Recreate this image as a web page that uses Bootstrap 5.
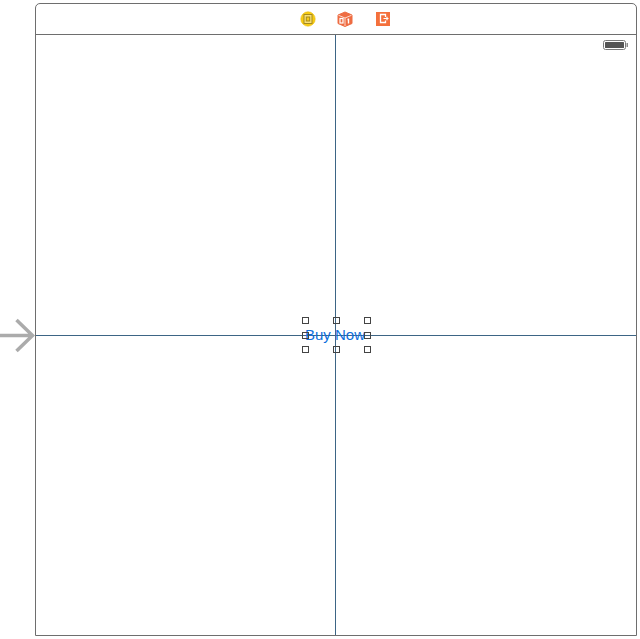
<!DOCTYPE html>
<html lang="en">
<head>
<meta charset="utf-8">
<title>Buy Now</title>
<link rel="stylesheet" href="https://cdn.jsdelivr.net/npm/bootstrap@5.3.0/dist/css/bootstrap.min.css">
<style>
html,body{background:#fff;height:100%;overflow:hidden}
.stage{width:640px;height:639px;padding:3px 3px 3px 35px}
.scene{width:602px;height:633px;border:1px solid #6e6e6e;border-radius:5px 5px 0 0;background:#fff}
.scene-bar{height:31px;border-bottom:1px solid #6e6e6e;gap:21px;padding-left:18px}
.scene-view{height:601px}
.guide-v,.guide-h{position:absolute;background:#3d6585}
.guide-v{left:299px;top:0;width:1px;height:100%}
.guide-h{left:0;top:300px;height:1px;width:100%}
.entry-arrow{position:absolute;left:-36px;top:283px}
.battery{position:absolute;right:8px;top:5px}
.buy-label{position:absolute;left:269px;top:291px;font:15px/18px "Liberation Sans",Arial,sans-serif;color:#0d6fdc;white-space:nowrap}
.grip{position:absolute;width:7px;height:7px;border:1px solid #444;background:transparent}
</style>
</head>
<body class="m-0">
<div class="stage">
  <div class="scene d-flex flex-column position-relative">
    <div class="scene-bar d-flex align-items-center justify-content-center flex-shrink-0">
      <svg width="16" height="16" viewBox="0 0 16 16"><circle cx="8" cy="8" r="7.200" fill="#f7cb12" stroke="#ebbc0e" stroke-width=".6"/><rect x="4" y="3.500" width="8" height="9" fill="#f8e07a" stroke="#a68a1c"/><rect x="6.300" y="6" width="3.400" height="4" fill="#f7cb12" stroke="#a68a1c"/></svg>
      <svg width="16" height="16" viewBox="0 0 16 16"><path d="M1 4 8 1l7 3v8.500L8 15.500 1 12.500z" fill="#ee6c42" stroke="#ee6c42" stroke-linejoin="round"/><path d="M1.500 4.300 8 7l6.500-2.700M8 7v8" stroke="#fdd9cb" stroke-width="1" fill="none"/><rect x="3" y="7.500" width="3" height="4.500" fill="none" stroke="#fff" stroke-width="1.200"/><path d="M11.500 7.500v5M10.500 8.500h1" stroke="#fff" stroke-width="1.400" fill="none"/></svg>
      <svg width="16" height="16" viewBox="-1.500 0 16 16"><rect x=".5" y="1" width="14" height="14" fill="#f4703c"/><path d="M10 6V3.500H5v8h5V9.500" fill="none" stroke="#fff" stroke-width="1.300"/><path d="M8 7.500h5M11.500 5.800v3.400" fill="none" stroke="#fff" stroke-width="1.200"/></svg>
    </div>
    <div class="scene-view position-relative flex-grow-1">
      <div class="guide-v"></div>
      <div class="guide-h"></div>
      <svg class="battery" width="25" height="10" viewBox="0 0 25 10"><rect x=".5" y=".5" width="22" height="9" rx="2" fill="#fff" stroke="#7a7a7a"/><rect x="2" y="2" width="19" height="6" rx=".5" fill="#555"/><rect x="23.500" y="3" width="1.500" height="4" fill="#8a8a8a"/></svg>
      <span class="buy-label">Buy Now</span>
      <i class="grip" style="left:266px;top:282px"></i>
      <i class="grip" style="left:297px;top:282px"></i>
      <i class="grip" style="left:328px;top:282px"></i>
      <i class="grip" style="left:266px;top:297px"></i>
      <i class="grip" style="left:328px;top:297px"></i>
      <i class="grip" style="left:266px;top:311px"></i>
      <i class="grip" style="left:297px;top:311px"></i>
      <i class="grip" style="left:328px;top:311px"></i>
      <svg class="entry-arrow" width="36" height="36" viewBox="0 0 36 36"><path d="M0 17.500H32M16.500 2 32.500 17.500 16.500 33" fill="none" stroke="#ababab" stroke-width="3.500"/></svg>
    </div>
  </div>
</div>
<script src="https://cdn.jsdelivr.net/npm/bootstrap@5.3.0/dist/js/bootstrap.bundle.min.js"></script>
</body>
</html>
